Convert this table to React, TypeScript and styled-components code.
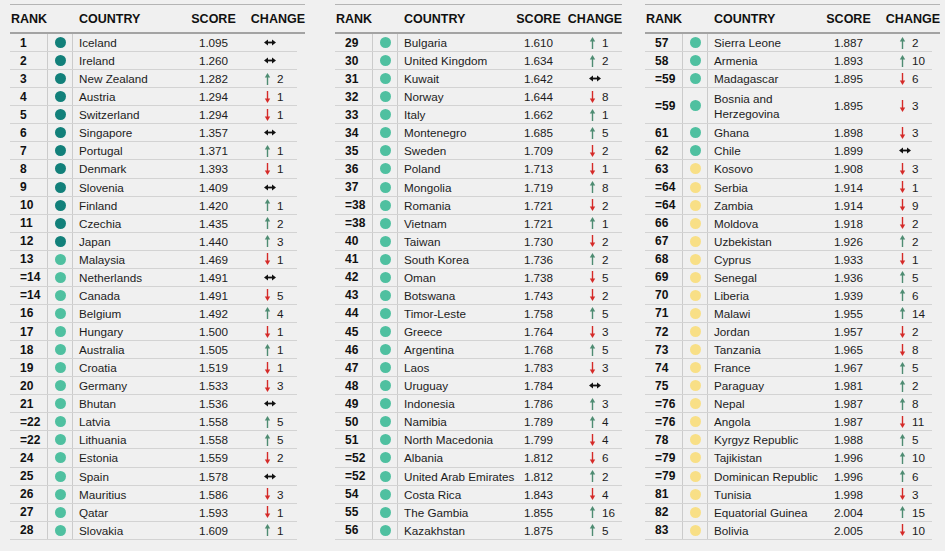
import React from 'react';
import styled, { createGlobalStyle } from 'styled-components';

type Tier = 'd' | 'l' | 'y';

interface IRow {
  rank: string;
  country: string;
  score: string;
  change: number;
  tier: Tier;
  tall: boolean;
}

const GlobalStyle = createGlobalStyle`
  html, body {
    margin: 0;
    padding: 0;
    background: #f0f0f0;
  }
  body {
    font-family: "Liberation Sans", Arial, sans-serif;
    color: #1c1c1c;
  }
`;

const TIER_COLORS: Record<Tier, string> = {
  d: '#12807a',
  l: '#4fc0a0',
  y: '#f8df86',
};

const ROW_H = 18.07;

const Page = styled.div`
  display: flex;
  align-items: flex-start;
  padding: 4px 0 0 10px;
  width: 945px;
  height: 551px;
  box-sizing: border-box;
  overflow: hidden;
`;

const Panel = styled.div<{ $width: number; $offset: number }>`
  width: ${(p) => p.$width}px;
  margin-left: ${(p) => p.$offset}px;
  flex-shrink: 0;
`;

const HeaderBar = styled.div`
  display: grid;
  grid-template-columns: 63px 115px 51px 1fr;
  align-items: center;
  height: 30px;
  box-sizing: border-box;
  border-top: 1.5px solid #b4b4b4;
  border-bottom: 2px solid #a3a3a3;
  font-weight: 700;
  font-size: 12.5px;
  color: #111;
  white-space: nowrap;
`;

const HeadCell = styled.div<{ $align?: 'left' | 'center' | 'right'; $pad?: number }>`
  text-align: ${(p) => p.$align || 'left'};
  padding-left: ${(p) => p.$pad || 0}px;
  padding-top: 1px;
`;

const Body = styled.div`
  width: 287px;
`;

const Row = styled.div<{ $tall: boolean }>`
  display: grid;
  grid-template-columns: 38px 25px 115px 51px 1fr;
  height: ${(p) => (p.$tall ? ROW_H * 2 : ROW_H)}px;
  box-sizing: border-box;
  border-bottom: 1px solid #d3d3d3;
  font-size: 11.7px;
  align-items: stretch;
`;

const RankCell = styled.div`
  display: flex;
  align-items: center;
  padding-left: 10px;
  font-weight: 700;
  font-size: 12px;
  border-right: 1px solid #cbcbcb;
  color: #111;
`;

const DotCell = styled.div`
  display: flex;
  align-items: center;
  justify-content: center;
  border-right: 1px solid #cbcbcb;
`;

const Dot = styled.span<{ $tier: Tier }>`
  width: 11px;
  height: 11px;
  border-radius: 50%;
  background: ${(p) => TIER_COLORS[p.$tier]};
`;

const CountryCell = styled.div<{ $tall: boolean }>`
  display: flex;
  align-items: center;
  padding-left: 6px;
  line-height: ${(p) => (p.$tall ? '15px' : 'normal')};
  white-space: ${(p) => (p.$tall ? 'normal' : 'nowrap')};
`;

const ScoreCell = styled.div`
  display: flex;
  align-items: center;
  justify-content: center;
`;

const ChangeCell = styled.div`
  display: flex;
  align-items: center;
  gap: 6px;
  padding-left: 25px;
`;

const ArrowSvg = styled.svg`
  display: block;
  flex-shrink: 0;
`;

const Change = ({ value }: { value: number }) => {
  if (value === 0) {
    return (
      <ChangeCell>
        <ArrowSvg width="12" height="7" viewBox="0 0 12 7">
          <line x1="3" y1="3.5" x2="9" y2="3.5" stroke="#111" strokeWidth="1.8" />
          <polygon points="0,3.5 4,0.6 4,6.4" fill="#111" />
          <polygon points="12,3.5 8,0.6 8,6.4" fill="#111" />
        </ArrowSvg>
      </ChangeCell>
    );
  }
  const up = value > 0;
  const color = up ? '#4e8c72' : '#d52a28';
  return (
    <ChangeCell>
      <ArrowSvg width="7" height="12" viewBox="0 0 7 12">
        {up ? (
          <>
            <line x1="3.5" y1="3" x2="3.5" y2="12" stroke={color} strokeWidth="1.4" />
            <polygon points="0.8,4.6 3.5,0 6.2,4.6" fill={color} />
          </>
        ) : (
          <>
            <line x1="3.5" y1="0" x2="3.5" y2="9" stroke={color} strokeWidth="1.4" />
            <polygon points="0.8,7.4 3.5,12 6.2,7.4" fill={color} />
          </>
        )}
      </ArrowSvg>
      <span>{Math.abs(value)}</span>
    </ChangeCell>
  );
};

const parse = (src: string): IRow[] =>
  src
    .trim()
    .split('\n')
    .map((line) => {
      const [rank, country, score, change, tier, tall] = line.trim().split('|');
      return {
        rank,
        country,
        score,
        change: Number(change),
        tier: tier as Tier,
        tall: tall === 't',
      };
    });

const COL1 = parse(`
1|Iceland|1.095|0|d
2|Ireland|1.260|0|d
3|New Zealand|1.282|2|d
4|Austria|1.294|-1|d
5|Switzerland|1.294|-1|d
6|Singapore|1.357|0|d
7|Portugal|1.371|1|d
8|Denmark|1.393|-1|d
9|Slovenia|1.409|0|d
10|Finland|1.420|1|d
11|Czechia|1.435|2|d
12|Japan|1.440|3|d
13|Malaysia|1.469|-1|l
=14|Netherlands|1.491|0|l
=14|Canada|1.491|-5|l
16|Belgium|1.492|4|l
17|Hungary|1.500|-1|l
18|Australia|1.505|1|l
19|Croatia|1.519|-1|l
20|Germany|1.533|-3|l
21|Bhutan|1.536|0|l
=22|Latvia|1.558|5|l
=22|Lithuania|1.558|5|l
24|Estonia|1.559|-2|l
25|Spain|1.578|0|l
26|Mauritius|1.586|-3|l
27|Qatar|1.593|-1|l
28|Slovakia|1.609|1|l
`);

const COL2 = parse(`
29|Bulgaria|1.610|1|l
30|United Kingdom|1.634|2|l
31|Kuwait|1.642|0|l
32|Norway|1.644|-8|l
33|Italy|1.662|1|l
34|Montenegro|1.685|5|l
35|Sweden|1.709|-2|l
36|Poland|1.713|-1|l
37|Mongolia|1.719|8|l
=38|Romania|1.721|-2|l
=38|Vietnam|1.721|1|l
40|Taiwan|1.730|-2|l
41|South Korea|1.736|2|l
42|Oman|1.738|-5|l
43|Botswana|1.743|-2|l
44|Timor-Leste|1.758|5|l
45|Greece|1.764|-3|l
46|Argentina|1.768|5|l
47|Laos|1.783|-3|l
48|Uruguay|1.784|0|l
49|Indonesia|1.786|3|l
50|Namibia|1.789|4|l
51|North Macedonia|1.799|-4|l
=52|Albania|1.812|-6|l
=52|United Arab Emirates|1.812|2|l
54|Costa Rica|1.843|-4|l
55|The Gambia|1.855|16|l
56|Kazakhstan|1.875|5|l
`);

const COL3 = parse(`
57|Sierra Leone|1.887|2|l
58|Armenia|1.893|10|l
=59|Madagascar|1.895|-6|l
=59|Bosnia and Herzegovina|1.895|-3|l|t
61|Ghana|1.898|-3|l
62|Chile|1.899|0|l
63|Kosovo|1.908|-3|y
=64|Serbia|1.914|-1|y
=64|Zambia|1.914|-9|y
66|Moldova|1.918|-2|y
67|Uzbekistan|1.926|2|y
68|Cyprus|1.933|-1|y
69|Senegal|1.936|5|y
70|Liberia|1.939|6|y
71|Malawi|1.955|14|y
72|Jordan|1.957|-2|y
73|Tanzania|1.965|-8|y
74|France|1.967|5|y
75|Paraguay|1.981|2|y
=76|Nepal|1.987|8|y
=76|Angola|1.987|-11|y
78|Kyrgyz Republic|1.988|5|y
=79|Tajikistan|1.996|10|y
=79|Dominican Republic|1.996|6|y
81|Tunisia|1.998|-3|y
82|Equatorial Guinea|2.004|15|y
83|Bolivia|2.005|-10|y
`);

const RankTable = ({ rows, width, offset }: { rows: IRow[]; width: number; offset: number }) => (
  <Panel $width={width} $offset={offset}>
    <HeaderBar>
      <HeadCell $pad={1}>RANK</HeadCell>
      <HeadCell $pad={6}>COUNTRY</HeadCell>
      <HeadCell $align="center">SCORE</HeadCell>
      <HeadCell $align="right">CHANGE</HeadCell>
    </HeaderBar>
    <Body>
      {rows.map((row, i) => (
        <Row key={i} $tall={row.tall}>
          <RankCell>{row.rank}</RankCell>
          <DotCell>
            <Dot $tier={row.tier} />
          </DotCell>
          <CountryCell $tall={row.tall}>{row.country}</CountryCell>
          <ScoreCell>{row.score}</ScoreCell>
          <Change value={row.change} />
        </Row>
      ))}
    </Body>
  </Panel>
);

const App = () => (
  <>
    <GlobalStyle />
    <Page>
      <RankTable rows={COL1} width={295} offset={0} />
      <RankTable rows={COL2} width={287} offset={30} />
      <RankTable rows={COL3} width={295} offset={23} />
    </Page>
  </>
);

export default App;
